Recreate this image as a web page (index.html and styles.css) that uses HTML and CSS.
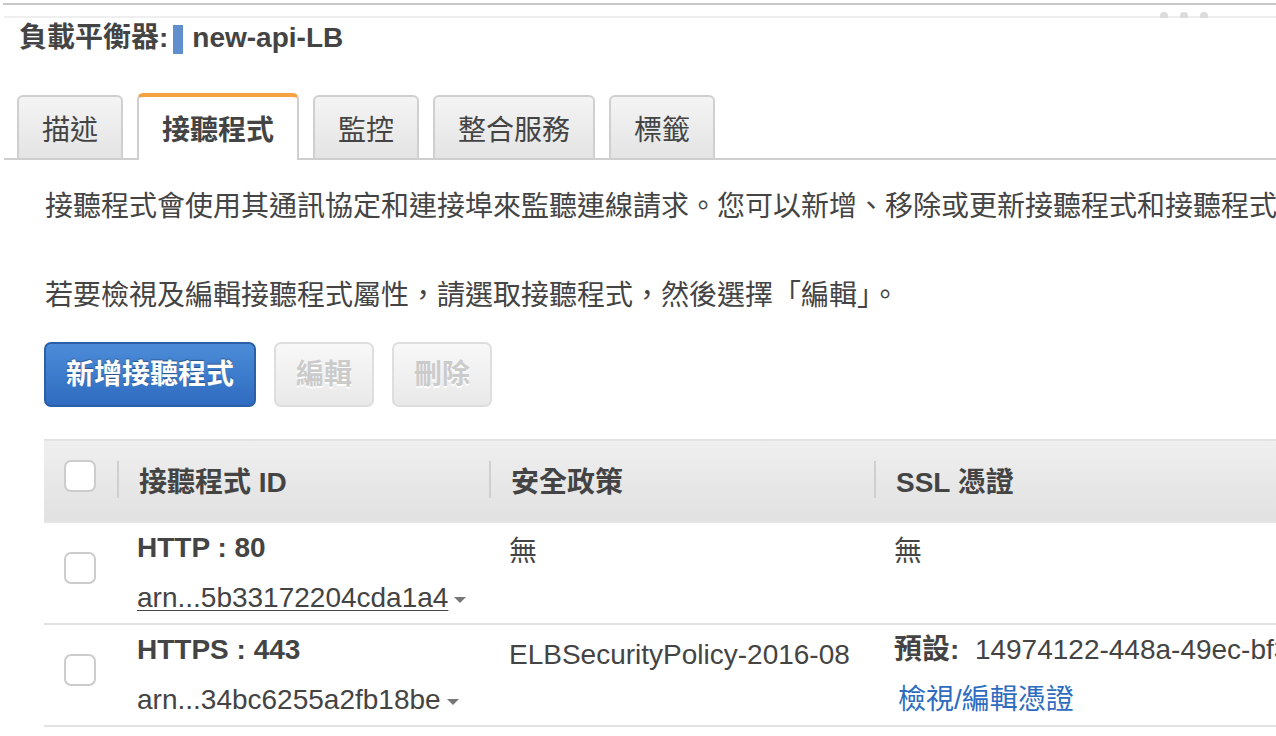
FILE: index.html
```html
<!DOCTYPE html>
<html lang="zh-Hant">
<head>
<meta charset="utf-8">
<title>負載平衡器</title>
<link rel="stylesheet" href="styles.css">
</head>
<body>
<div class="topline"></div>
<div class="handlebar">
  <span class="dot"></span><span class="dot"></span><span class="dot"></span>
</div>
<h1 class="title"><span>負載平衡器:</span><span class="marker"></span><span>new-api-LB</span></h1>

<div class="tabs">
  <div class="tab">描述</div>
  <div class="tab active">接聽程式</div>
  <div class="tab">監控</div>
  <div class="tab">整合服務</div>
  <div class="tab">標籤</div>
</div>

<div class="content">
  <p class="desc first">接聽程式會使用其通訊協定和連接埠來監聽連線請求。您可以新增、移除或更新接聽程式和接聽程式的規則。</p>
  <p class="desc">若要檢視及編輯接聽程式屬性，請選取接聽程式，然後選擇「編輯」。</p>

  <div class="actions">
    <button class="btn primary">新增接聽程式</button>
    <button class="btn disabled">編輯</button>
    <button class="btn disabled">刪除</button>
  </div>

  <div class="table">
    <div class="thead">
      <div class="cell check-cell"><span class="checkbox"></span></div>
      <div class="cell th sep">接聽程式 ID</div>
      <div class="cell th sep">安全政策</div>
      <div class="cell th sep">SSL 憑證</div>
    </div>

    <div class="row">
      <div class="cell check-cell"><span class="checkbox"></span></div>
      <div class="cell col">
        <div class="line strong">HTTP : 80</div>
        <div class="line"><span class="arn underline">arn...5b33172204cda1a4</span><span class="caret"></span></div>
      </div>
      <div class="cell col"><div class="line none">無</div></div>
      <div class="cell col"><div class="line none">無</div></div>
    </div>

    <div class="row">
      <div class="cell check-cell"><span class="checkbox"></span></div>
      <div class="cell col">
        <div class="line strong">HTTPS : 443</div>
        <div class="line"><span class="arn">arn...34bc6255a2fb18be</span><span class="caret"></span></div>
      </div>
      <div class="cell col"><div class="line policy">ELBSecurityPolicy-2016-08</div></div>
      <div class="cell col">
        <div class="line"><span class="strong">預設:</span>&nbsp; 14974122-448a-49ec-bf3c-6f2a9d0e71c5</div>
        <div class="line"><a class="link" href="#">檢視/編輯憑證</a></div>
      </div>
    </div>
  </div>
</div>
</body>
</html>
```

FILE: styles.css
```css
html, body {
  margin: 0;
  padding: 0;
  background: #ffffff;
  overflow: hidden;
}

body {
  width: 1276px;
  height: 736px;
  font-family: "Liberation Sans", "Noto Sans CJK TC", Arial, sans-serif;
  color: #444444;
  font-size: 28px;
}

.topline {
  margin: 3px 0 0 3px;
  height: 2px;
  background: #c8c8c8;
}

.handlebar {
  margin-left: 4px;
  height: 11px;
  border-bottom: 2px solid #efefef;
  display: flex;
  justify-content: flex-end;
  align-items: flex-end;
  gap: 12px;
  padding-right: 68px;
}

.dot {
  width: 8px;
  height: 6px;
  border-radius: 4px 4px 1px 1px;
  background: #dcdcdc;
  margin-bottom: -2px;
}

.title {
  margin: 0 0 35px 0;
  padding-left: 19px;
  height: 40px;
  line-height: 40px;
  font-size: 28px;
  font-weight: bold;
  color: #444444;
  display: flex;
  align-items: center;
  white-space: nowrap;
}

.marker {
  display: inline-block;
  width: 10px;
  height: 29px;
  background: #5f90cd;
  margin: 2px 9px 0 5px;
}

.tabs {
  margin-left: 4px;
  padding-left: 13px;
  height: 65px;
  display: flex;
  align-items: flex-end;
  gap: 14px;
  border-bottom: 2px solid #cfcfcf;
}

.tab {
  box-sizing: border-box;
  height: 63px;
  padding: 0 23px;
  border: 2px solid #cfcfcf;
  border-bottom: none;
  border-radius: 6px 6px 0 0;
  background: linear-gradient(#f4f4f4, #e4e4e4);
  display: flex;
  align-items: center;
  font-size: 28px;
  color: #444444;
  white-space: nowrap;
}

.tab.active {
  height: 67px;
  margin-bottom: -2px;
  border-top: 4px solid #f5a33e;
  background: #ffffff;
  font-weight: bold;
  padding-bottom: 2px;
}

.content {
  padding: 27px 0 0 44px;
  width: 1800px;
}

.desc {
  margin: 0 0 49px 1px;
  line-height: 40px;
  font-size: 28px;
  color: #444444;
  white-space: nowrap;
}

.desc + .desc {
  margin-bottom: 26px;
}

.actions {
  display: flex;
  gap: 18px;
  margin-bottom: 32px;
}

.btn {
  box-sizing: border-box;
  height: 65px;
  padding: 0 20px;
  border-radius: 7px;
  font-family: "Liberation Sans", "Noto Sans CJK TC", Arial, sans-serif;
  font-size: 28px;
  font-weight: bold;
  line-height: 1;
}

.btn.primary {
  border: 2px solid #2b5fa8;
  background: linear-gradient(#4c8cd8, #2f6bc0);
  color: #ffffff;
  text-shadow: 0 -1px 1px rgba(0, 0, 0, 0.35);
}

.btn.disabled {
  border: 2px solid #dedede;
  background: linear-gradient(#f8f8f8, #e9e9e9);
  color: #cbcbcb;
  text-shadow: 0 2px 0 #ffffff;
}

.table {
  width: 1500px;
}

.thead,
.row {
  display: grid;
  grid-template-columns: 73px 372px 385px 670px;
}

.thead {
  height: 80px;
  border-top: 2px solid #e2e2e2;
  border-bottom: 2px solid #e6e6e6;
  background: linear-gradient(#efefef, #e1e1e1);
}

.cell {
  box-sizing: border-box;
}

.check-cell {
  padding: 19px 0 0 20px;
}

.row .check-cell {
  padding-top: 29px;
}

.checkbox {
  display: block;
  box-sizing: border-box;
  width: 32px;
  height: 32px;
  border: 2px solid #cccccc;
  border-radius: 7px;
  background: #ffffff;
}

.th {
  display: flex;
  align-items: center;
  padding-left: 22px;
  padding-bottom: 3px;
  font-weight: bold;
  color: #444444;
}

.sep {
  background: linear-gradient(#cfcfcf, #cfcfcf) no-repeat 0 20px / 2px 37px;
}

.row {
  height: 100px;
  border-bottom: 2px solid #e2e2e2;
  box-sizing: content-box;
}

.col {
  padding-left: 20px;
  white-space: nowrap;
}

.line {
  height: 50px;
  line-height: 50px;
}

.none {
  padding-top: 4px;
}

.policy {
  padding-top: 5px;
}

.strong {
  font-weight: bold;
}

.underline {
  text-decoration: underline;
  text-underline-offset: 3px;
  text-decoration-thickness: 1px;
}

.caret {
  display: inline-block;
  width: 0;
  height: 0;
  margin-left: 6px;
  vertical-align: middle;
  border-left: 6px solid transparent;
  border-right: 6px solid transparent;
  border-top: 6px solid #777777;
}

.link {
  color: #2d6cbf;
  text-decoration: none;
  margin-left: 4px;
}
```
